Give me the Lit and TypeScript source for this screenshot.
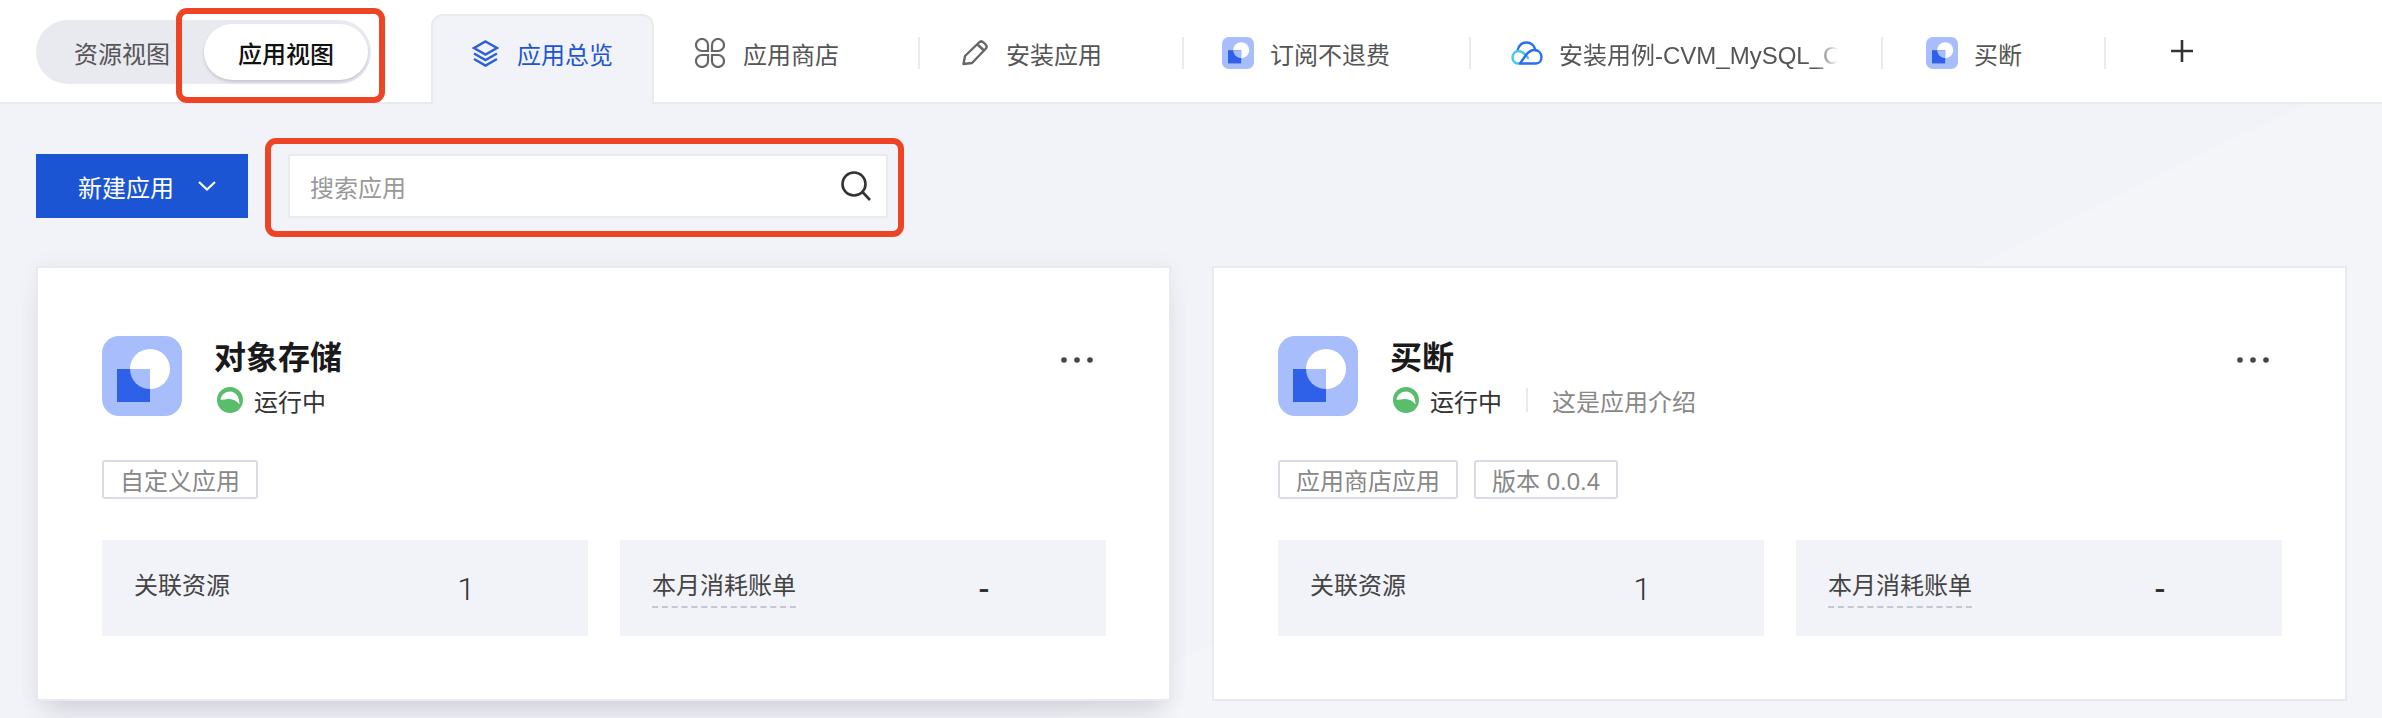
import { css, html, LitElement, svg } from 'lit';
import { customElement } from 'lit/decorators.js';

const logo = (size: number) => html`
  <svg class="logo" width=${size} height=${size} viewBox="0 0 80 80">
    ${svg`
      <rect width="80" height="80" rx="17" fill="#a8bdfb" />
      <circle cx="48" cy="33" r="20" fill="#fff" />
      <rect x="15" y="33" width="33" height="33" fill="#2f60e8" />
      <path d="M48 33H28A20 20 0 0 0 48 53Z" fill="#a8bdfb" />
    `}
  </svg>
`;

const icons: Record<string, unknown> = {
  layers: html`<svg width="27" height="27" viewBox="0 0 27 27" fill="none" stroke="#2a5fd8" stroke-width="2.4">
    <path d="M13.5 1.5 25 8l-11.5 6.5L2 8Z" />
    <path d="m2 13.5 11.5 6.5L25 13.5" />
    <path d="m2 19 11.5 6.5L25 19" />
  </svg>`,
  store: html`<svg width="30" height="30" viewBox="0 0 30 30" fill="none" stroke="#666" stroke-width="2.2">
    <path d="M13 13H7a6 6 0 1 1 6-6Z" />
    <path d="M17 13h6a6 6 0 1 0-6-6Z" />
    <path d="M13 17H7a6 6 0 1 0 6 6Z" />
    <path d="M17 17h6a6 6 0 1 1-6 6Z" />
  </svg>`,
  pencil: html`<svg width="26" height="26" viewBox="0 0 26 26" fill="none" stroke="#666" stroke-width="2.4" stroke-linejoin="round">
    <path d="M1.500 24 3 16 17 2.500c1.500-1.500 3-1.500 4.500 0l2 2c1.500 1.500 1.500 3 0 4.500L10 23Z" />
    <path d="m15.500 4.500 6.500 6" />
  </svg>`,
  app: logo(32),
  cloud: html`<svg width="32" height="24" viewBox="0 0 32 24" fill="none" stroke-width="2.400" stroke-linecap="round">
    <path d="M6.700 9C8 4 11 1.500 15.500 1.500c4.500 0 8 3 9 7.500" stroke="#2a6ef0" />
    <path d="M7.500 10C10.500 10 12.500 11.500 14.500 14l2.500 3" stroke="#4fc8e8" />
    <path d="M9 22.500H7c-3.500 0-5.500-3-5.500-6C1.500 13 4 10 7.500 10" stroke="#4fc8e8" />
    <path d="M9 22.500h16c3.500 0 5.500-3 5.500-6.500 0-4-3-7-7-7-4 0-6.500 2.500-8.500 5l-6 8.500" stroke="#2a6ef0" />
  </svg>`,
};

// width and left pad of each tab, read off the reference
const tabs = [
  { label: '应用总览', icon: 'layers', width: 223, pad: 41, active: true },
  { label: '应用商店', icon: 'store', width: 266, pad: 41, sep: true },
  { label: '安装应用', icon: 'pencil', width: 264, pad: 42, sep: true },
  { label: '订阅不退费', icon: 'app', width: 287, pad: 38, sep: true },
  { label: '安装用例-CVM_MySQL_CVM', icon: 'cloud', width: 412, pad: 40, sep: true, clip: true },
  { label: '买断', icon: 'app', width: 223, pad: 43, sep: true },
];

const cards = [
  {
    name: '对象存储',
    desc: '',
    tags: ['自定义应用'],
    shadow: true,
  },
  {
    name: '买断',
    desc: '这是应用介绍',
    tags: ['应用商店应用', '版本 0.0.4'],
    shadow: false,
  },
];

@customElement('app-root')
export class AppRoot extends LitElement {
  static override styles = css`
    :host {
      display: block;
      width: 2382px;
      height: 718px;
      overflow: hidden;
      font-family: 'Liberation Sans', 'Noto Sans CJK SC', sans-serif;
      font-size: 24px;
      color: #444;
    }
    header {
      display: flex;
      height: 104px;
      box-sizing: border-box;
      padding-left: 36px;
      background: #fff;
      border-bottom: 2px solid #e9eaf0;
    }
    .switch {
      position: relative;
      display: flex;
      align-items: center;
      align-self: flex-start;
      box-sizing: border-box;
      width: 335px;
      height: 64px;
      margin: 20px 60px 0 0;
      padding: 0 3px 0 38px;
      justify-content: space-between;
      border-radius: 32px;
      background: #e9eaf0;
      color: #555;
    }
    .pill {
      display: flex;
      align-items: center;
      justify-content: center;
      width: 164px;
      height: 56px;
      border-radius: 28px;
      background: #fff;
      color: #111;
      font-weight: 500;
      box-shadow: 0 2px 3px rgba(90, 95, 120, 0.25);
    }
    .mark {
      position: absolute;
      box-sizing: border-box;
      border: 6px solid #ee4426;
      border-radius: 11px;
      pointer-events: none;
    }
    .mark-switch {
      left: 140px;
      top: -12px;
      width: 209px;
      height: 95px;
    }
    .mark-search {
      left: -25px;
      top: -18px;
      width: 639px;
      height: 99px;
    }
    .tabs {
      display: flex;
      align-self: flex-end;
      height: 88px;
    }
    .tab {
      display: flex;
      align-items: center;
      box-sizing: border-box;
      padding-bottom: 10px;
      color: #555;
    }
    .tab.active {
      height: 90px;
      margin-bottom: -2px;
      padding-bottom: 14px;
      background: #f2f3f8;
      border: 2px solid #e9eaf0;
      border-bottom: 0;
      border-radius: 12px 12px 0 0;
      color: #1c55d3;
    }
    .tab-icon {
      display: flex;
      align-items: center;
      flex: none;
      margin-right: 18px;
    }
    .tab-icon.tight {
      margin-right: 16px;
    }
    .tab-label {
      white-space: nowrap;
    }
    .tab-label.clip {
      width: 279px;
      overflow: hidden;
      -webkit-mask-image: linear-gradient(to right, #000 92%, transparent);
      mask-image: linear-gradient(to right, #000 92%, transparent);
    }
    .sep {
      flex: none;
      width: 2px;
      height: 32px;
      margin-left: auto;
      background: #e9eaf0;
    }
    .plus {
      align-self: center;
      margin-left: 64px;
    }
    .logo {
      display: block;
      flex: none;
    }
    main {
      height: 614px;
      box-sizing: border-box;
      padding: 50px 35px 0 36px;
      background: linear-gradient(153.7deg, #f2f3f8 63.6%, #f4f5f9 63.6%);
    }
    .toolbar {
      display: flex;
      gap: 40px;
      margin-bottom: 48px;
    }
    .create {
      display: flex;
      align-items: center;
      gap: 24px;
      box-sizing: border-box;
      width: 212px;
      height: 64px;
      padding-left: 42px;
      background: #1c55d3;
      color: #fff;
    }
    .search {
      position: relative;
      display: flex;
      align-items: center;
      justify-content: space-between;
      box-sizing: border-box;
      width: 600px;
      height: 64px;
      padding: 0 15px 0 20px;
      background: #fff;
      border: 2px solid #e9eaf0;
      color: #999;
    }
    .cards {
      display: grid;
      grid-template-columns: 1135px 1135px;
      gap: 41px;
    }
    .card {
      box-sizing: border-box;
      height: 435px;
      padding: 68px 64px 0;
      background: #fff;
      border: 2px solid #e9eaf0;
    }
    .card.shadow {
      box-shadow:
        0 20px 24px -10px rgba(60, 65, 90, 0.16),
        0 0 20px rgba(60, 65, 90, 0.05);
    }
    .card-head {
      display: flex;
      height: 80px;
    }
    .info {
      flex: 1;
      padding-left: 32px;
    }
    .name {
      height: 44px;
      line-height: 44px;
      font-size: 32px;
      font-weight: 700;
      color: #1a1a1a;
    }
    .status {
      display: flex;
      align-items: center;
      height: 40px;
      padding-left: 3px;
      color: #333;
    }
    .status svg {
      margin-right: 11px;
    }
    .status-sep {
      width: 2px;
      height: 24px;
      margin: 0 24px;
      background: #e9eaf0;
    }
    .desc {
      color: #888;
    }
    .more {
      flex: none;
      margin: 21px 12px 0 0;
    }
    .tags {
      display: flex;
      gap: 16px;
      margin-top: 44px;
    }
    .tag {
      display: flex;
      align-items: center;
      box-sizing: border-box;
      height: 39px;
      padding: 0 16px;
      border: 2px solid #d9dde3;
      border-radius: 3px;
      color: #888;
    }
    .stats {
      display: grid;
      grid-template-columns: 486px 486px;
      gap: 32px;
      margin-top: 41px;
    }
    .stat {
      display: flex;
      height: 96px;
      box-sizing: border-box;
      padding-left: 32px;
      background: #f2f3f8;
    }
    .stat-label {
      width: 322px;
      padding-top: 30px;
    }
    .stat-label span {
      display: inline-block;
      line-height: 32px;
      padding-bottom: 4px;
    }
    .stat-label .tip {
      border-bottom: 2px dashed #c5c8d4;
    }
    .stat-value {
      width: 20px;
      padding-top: 30px;
      text-align: center;
      line-height: 38px;
      font-family: Roboto, sans-serif;
      font-weight: 300;
      font-size: 32px;
      color: #333;
    }
    .stat-value.dash {
      font-weight: 500;
    }
  `;

  private renderCard(card: (typeof cards)[number]) {
    return html`
      <section class="card ${card.shadow ? 'shadow' : ''}">
        <div class="card-head">
          ${logo(80)}
          <div class="info">
            <div class="name">${card.name}</div>
            <div class="status">
              <svg width="26" height="26" viewBox="0 0 26 26">
                <circle cx="13" cy="13" r="13" fill="#5abd6c" />
                <path d="M3.500 12.500C4.500 7.500 8.500 4.500 13 4.500c5.500 0 9.500 5 9.500 13C20 14 16 11.500 11 12c-3 .3-5 1-7.500.5Z" fill="#fff" />
              </svg>
              运行中
              ${card.desc
                ? html`<i class="status-sep"></i><span class="desc">${card.desc}</span>`
                : ''}
            </div>
          </div>
          <svg class="more" width="32" height="6" viewBox="0 0 32 6" fill="#444">
            <circle cx="3" cy="3" r="2.800" />
            <circle cx="16" cy="3" r="2.800" />
            <circle cx="29" cy="3" r="2.800" />
          </svg>
        </div>
        <div class="tags">
          ${card.tags.map((t) => html`<span class="tag">${t}</span>`)}
        </div>
        <div class="stats">
          <div class="stat">
            <div class="stat-label"><span>关联资源</span></div>
            <div class="stat-value">1</div>
          </div>
          <div class="stat">
            <div class="stat-label"><span class="tip">本月消耗账单</span></div>
            <div class="stat-value dash">-</div>
          </div>
        </div>
      </section>
    `;
  }

  override render() {
    return html`
      <header>
        <div class="switch">
          <span>资源视图</span>
          <span class="pill">应用视图</span>
          <div class="mark mark-switch"></div>
        </div>
        <nav class="tabs">
          ${tabs.map(
            (t) => html`
              <div
                class="tab ${t.active ? 'active' : ''}"
                style="width:${t.width}px;padding-left:${t.pad - (t.active ? 2 : 0)}px"
              >
                <span class="tab-icon ${t.icon === 'app' || t.icon === 'cloud' ? 'tight' : ''}">${icons[t.icon]}</span>
                <span class="tab-label ${t.clip ? 'clip' : ''}">${t.label}</span>
                ${t.sep ? html`<i class="sep"></i>` : ''}
              </div>
            `,
          )}
        </nav>
        <svg class="plus" width="24" height="24" viewBox="0 0 24 24" stroke="#333" stroke-width="2.600">
          <path d="M12 1v22M1 12h22" />
        </svg>
      </header>
      <main>
        <div class="toolbar">
          <div class="create">
            新建应用
            <svg width="18" height="10" viewBox="0 0 18 10" fill="none" stroke="#fff" stroke-width="2.200">
              <path d="m1 1 8 7.500L17 1" />
            </svg>
          </div>
          <div class="search">
            搜索应用
            <svg width="30" height="30" viewBox="0 0 30 30" fill="none" stroke="#333" stroke-width="2.600">
              <circle cx="13" cy="13" r="11.500" />
              <path d="m21.500 21 7.500 8" />
            </svg>
            <div class="mark mark-search"></div>
          </div>
        </div>
        <div class="cards">${cards.map((c) => this.renderCard(c))}</div>
      </main>
    `;
  }
}
